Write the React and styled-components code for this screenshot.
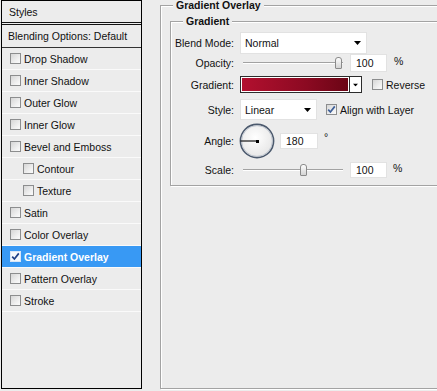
import React from 'react';
import styled, { createGlobalStyle } from 'styled-components';

const GlobalStyle = createGlobalStyle`
  html, body {
    margin: 0;
    padding: 0;
    background: #ececec;
  }
  * { box-sizing: border-box; }
`;

const Root = styled.div`
  display: flex;
  width: 437px;
  height: 391px;
  overflow: hidden;
  background: #ececec;
  font-family: 'Liberation Sans', Arial, sans-serif;
  font-size: 10.5px;
  color: #111;
`;

/* ---------- left styles list ---------- */

const StylesPanel = styled.div`
  margin-left: 1px;
  width: 141px;
  height: 389px;
  border: 1px solid #000;
  background: #ececec;
  display: flex;
  flex-direction: column;
  flex-shrink: 0;
`;

const PanelHeader = styled.div`
  height: 22px;
  padding-left: 7px;
  display: flex;
  align-items: center;
  border-bottom: 1px solid #111;
  margin-bottom: 1px;
`;

const BlendingRow = styled.div`
  height: 24px;
  padding-left: 6px;
  display: flex;
  align-items: center;
  border-top: 1px solid #111;
  border-bottom: 1px solid #333;
`;

const StyleRow = styled.div`
  height: 22px;
  padding-left: ${(p) => (p.$indent ? 21 : 8)}px;
  display: flex;
  align-items: center;
  gap: 3px;
  border-bottom: 1px solid #fafafa;
  background: ${(p) => (p.$active ? '#3899f4' : 'transparent')};
  color: ${(p) => (p.$active ? '#fff' : '#111')};
  font-weight: ${(p) => (p.$active ? 'bold' : 'normal')};
`;

const Box = styled.span`
  width: 11px;
  height: 11px;
  flex-shrink: 0;
  border: 1px solid ${(p) => (p.$light ? '#d8e6f7' : '#8c8d8e')};
  background: ${(p) => (p.$light ? '#f4f8fc' : 'linear-gradient(135deg, #d6d6d6 0%, #f2f2f2 70%, #fafafa 100%)')};
  display: flex;
  align-items: center;
  justify-content: center;
`;

const Checkbox = ({ checked, light, tint = '#3e5f98' }) => (
  <Box $light={light}>
    {checked && (
      <svg width="9" height="9" viewBox="0 0 9 9">
        <path d="M1.2 4.6 L3.4 7 L7.8 1.4" fill="none" stroke={light ? '#1d3f86' : tint} strokeWidth="1.7" />
      </svg>
    )}
  </Box>
);

/* ---------- right settings ---------- */

const SettingsArea = styled.div`
  flex: 1;
  padding: 5px 0 0 18px;
`;

const GroupBox = styled.div`
  width: 320px;
  height: ${(p) => p.$h}px;
  margin: ${(p) => p.$m};
  border: 1px solid #a3a3a3;
  box-shadow: inset 1px 1px 0 #fff, 1px 1px 0 #fff;
`;

const GroupTitle = styled.div`
  display: block;
  width: max-content;
  margin: -7px 0 0 ${(p) => p.$offset}px;
  padding: 0 3px;
  line-height: 13px;
  background: #ececec;
  font-weight: bold;
  font-size: 10.5px;
`;

const FormGrid = styled.div`
  margin-top: 4px;
  display: grid;
  grid-template-columns: 63px 1fr;
  grid-template-rows: 21px 20px 23px 27px 36px 22px;
  column-gap: 6px;
  align-items: center;
`;

const Label = styled.div`
  text-align: right;
  white-space: nowrap;
`;

const Controls = styled.div`
  display: flex;
  align-items: center;
  height: 100%;
`;

const SelectBox = styled.div`
  width: ${(p) => p.$w}px;
  height: ${(p) => p.$h}px;
  background: #fff;
  border: 1px solid #e2e2e2;
  display: flex;
  align-items: center;
  justify-content: space-between;
  padding: 0 5px 0 4px;
`;

const Arrow = () => (
  <svg width="7" height="4" viewBox="0 0 7 4">
    <path d="M0 0 H7 L3.5 4 Z" fill="#000" />
  </svg>
);

const Select = ({ value, w, h }) => (
  <SelectBox $w={w} $h={h}>
    <span>{value}</span>
    <Arrow />
  </SelectBox>
);

const SliderWrap = styled.div`
  position: relative;
  width: 106px;
  height: 14px;
  flex-shrink: 0;

  &::before {
    content: '';
    position: absolute;
    left: 3px;
    right: 3px;
    top: 6px;
    height: 1px;
    background: #a2a2a2;
    border-bottom: 1px solid #fff;
    box-sizing: content-box;
  }
`;

const Thumb = styled.span`
  position: absolute;
  top: 1px;
  width: 7px;
  height: 12px;
  border: 1px solid #8a8a8a;
  border-radius: 3px 3px 1px 1px;
  background: linear-gradient(#fdfdfd, #d4d4d4);
`;

const Slider = ({ value, min, max }) => {
  const left = 3 + ((value - min) / (max - min)) * 92;
  return (
    <SliderWrap>
      <Thumb style={{ left }} />
    </SliderWrap>
  );
};

const NumberField = styled.div`
  width: ${(p) => p.$w}px;
  height: ${(p) => p.$h}px;
  margin-left: ${(p) => p.$ml}px;
  background: #fff;
  border: 1px solid #e2e2e2;
  display: flex;
  align-items: center;
  padding-left: 5px;
`;

const Unit = styled.span`
  margin-left: ${(p) => p.$ml}px;
  align-self: ${(p) => (p.$raised ? 'flex-start' : 'center')};
  margin-top: ${(p) => (p.$raised ? '8px' : '0')};
  margin-bottom: ${(p) => (p.$raised ? '0' : '4px')};
`;

const Swatch = styled.div`
  width: 110px;
  height: 17px;
  border: 1px solid #2c2c2c;
  box-shadow: inset 0 0 0 1px #fff;
  background: linear-gradient(to right, #b3102f, #8c0a22 60%, #6a0515);
`;

const SwatchButton = styled.div`
  width: 12px;
  height: 17px;
  background: #fff;
  border: 1px solid #2c2c2c;
  border-left: none;
  display: flex;
  align-items: center;
  justify-content: center;

  svg { transform: scale(0.75); }
`;

const CheckLabel = styled.div`
  display: flex;
  align-items: center;
  gap: 3px;
  margin-left: ${(p) => p.$ml}px;
`;

const DialWrap = styled.div`
  width: 36px;
  height: 36px;
  margin-left: -1px;
  flex-shrink: 0;
`;

const Dial = () => (
  <DialWrap>
    <svg width="36" height="36" viewBox="0 0 36 36">
      <defs>
        <radialGradient id="dialFill" cx="45%" cy="40%" r="65%">
          <stop offset="0%" stopColor="#ffffff" />
          <stop offset="100%" stopColor="#e4e4e4" />
        </radialGradient>
      </defs>
      <circle cx="18" cy="18" r="16.6" fill="url(#dialFill)" stroke="#4c5a6e" strokeWidth="1.6" />
      <circle cx="18" cy="18" r="15.4" fill="none" stroke="#b7bfca" strokeWidth="0.8" />
      <line x1="1.5" y1="18" x2="18" y2="18" stroke="#000" strokeWidth="1.1" />
      <rect x="17" y="17" width="3" height="3" fill="#000" />
    </svg>
  </DialWrap>
);

const listItems = [
  { name: 'Drop Shadow' },
  { name: 'Inner Shadow' },
  { name: 'Outer Glow' },
  { name: 'Inner Glow' },
  { name: 'Bevel and Emboss' },
  { name: 'Contour', indent: true },
  { name: 'Texture', indent: true },
  { name: 'Satin' },
  { name: 'Color Overlay' },
  { name: 'Gradient Overlay', active: true },
  { name: 'Pattern Overlay' },
  { name: 'Stroke' },
];

const App = () => (
  <>
    <GlobalStyle />
    <Root>
      <StylesPanel>
        <PanelHeader>Styles</PanelHeader>
        <BlendingRow>Blending Options: Default</BlendingRow>
        {listItems.map((item) => (
          <StyleRow key={item.name} $indent={item.indent} $active={item.active}>
            <Checkbox checked={item.active} light={item.active} />
            {item.name}
          </StyleRow>
        ))}
      </StylesPanel>

      <SettingsArea>
        <GroupBox $h={384} $m="0">
          <GroupTitle $offset={12}>Gradient Overlay</GroupTitle>
          <GroupBox $h={165} $m="9px 0 0 9px">
            <GroupTitle $offset={12}>Gradient</GroupTitle>
            <FormGrid>
              <Label>Blend Mode:</Label>
              <Controls>
                <Select value="Normal" w={127} h={22} />
              </Controls>

              <Label>Opacity:</Label>
              <Controls>
                <Slider value={100} min={0} max={100} />
                <NumberField $w={37} $h={18} $ml={4}>100</NumberField>
                <Unit $ml={7}>%</Unit>
              </Controls>

              <Label>Gradient:</Label>
              <Controls>
                <Swatch />
                <SwatchButton>
                  <Arrow />
                </SwatchButton>
                <CheckLabel $ml={10}>
                  <Checkbox />
                  Reverse
                </CheckLabel>
              </Controls>

              <Label>Style:</Label>
              <Controls>
                <Select value="Linear" w={77} h={21} />
                <CheckLabel $ml={9}>
                  <Checkbox checked />
                  Align with Layer
                </CheckLabel>
              </Controls>

              <Label>Angle:</Label>
              <Controls>
                <Dial />
                <NumberField $w={38} $h={16} $ml={5}>180</NumberField>
                <Unit $ml={6} $raised>°</Unit>
              </Controls>

              <Label>Scale:</Label>
              <Controls>
                <Slider value={62} min={0} max={100} />
                <NumberField $w={37} $h={16} $ml={4}>100</NumberField>
                <Unit $ml={6}>%</Unit>
              </Controls>
            </FormGrid>
          </GroupBox>
        </GroupBox>
      </SettingsArea>
    </Root>
  </>
);

export default App;
